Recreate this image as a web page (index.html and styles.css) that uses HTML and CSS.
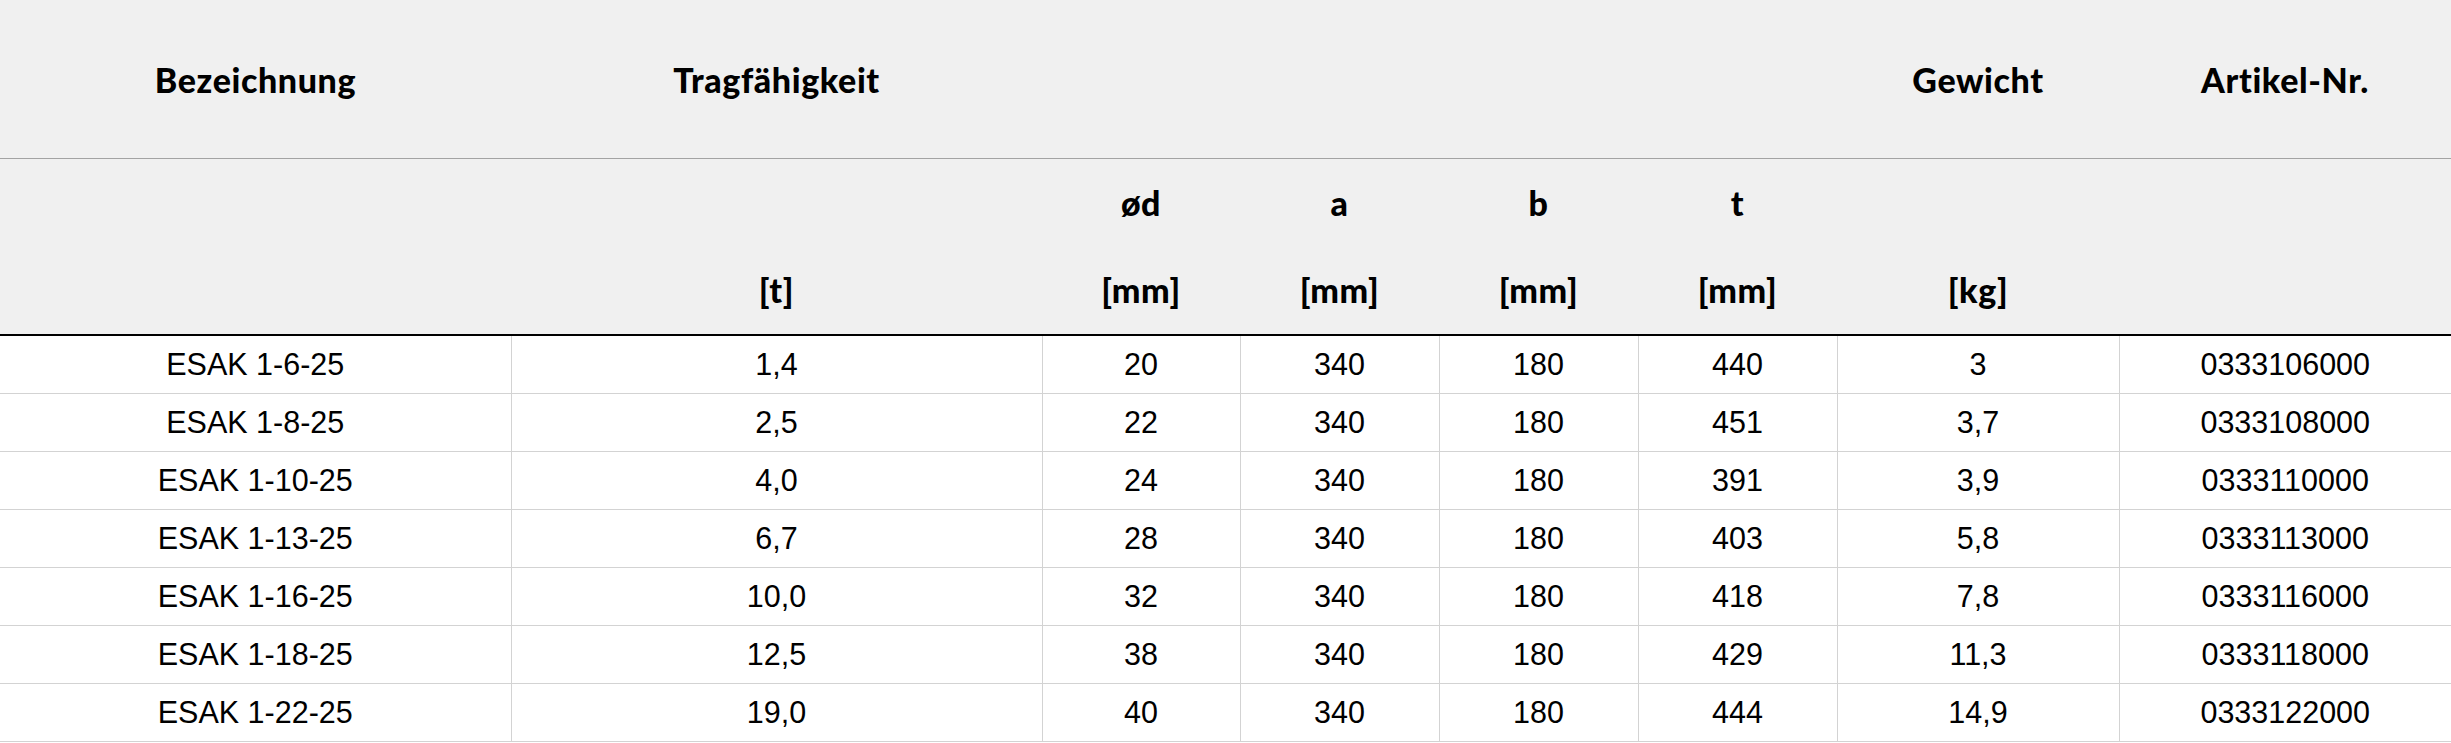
FILE: index.html
```html
<!DOCTYPE html>
<html lang="de">
<head>
<meta charset="utf-8">
<title>ESAK</title>
<link rel="stylesheet" href="styles.css">
</head>
<body>
<table class="spec">
  <colgroup>
    <col class="c-name"><col class="c-load"><col class="c-dim1"><col class="c-dim"><col class="c-dim"><col class="c-dim"><col class="c-weight"><col class="c-art">
  </colgroup>
  <thead>
    <tr class="head-main">
      <th>Bezeichnung</th>
      <th>Tragfähigkeit</th>
      <th></th>
      <th></th>
      <th></th>
      <th></th>
      <th>Gewicht</th>
      <th>Artikel-Nr.</th>
    </tr>
    <tr class="head-units">
      <th></th>
      <th><div class="line"></div><div class="line">[t]</div></th>
      <th><div class="line">ød</div><div class="line">[mm]</div></th>
      <th><div class="line">a</div><div class="line">[mm]</div></th>
      <th><div class="line">b</div><div class="line">[mm]</div></th>
      <th><div class="line">t</div><div class="line">[mm]</div></th>
      <th><div class="line"></div><div class="line">[kg]</div></th>
      <th></th>
    </tr>
  </thead>
  <tbody>
    <tr><td>ESAK 1-6-25</td><td>1,4</td><td>20</td><td>340</td><td>180</td><td>440</td><td>3</td><td>0333106000</td></tr>
    <tr><td>ESAK 1-8-25</td><td>2,5</td><td>22</td><td>340</td><td>180</td><td>451</td><td>3,7</td><td>0333108000</td></tr>
    <tr><td>ESAK 1-10-25</td><td>4,0</td><td>24</td><td>340</td><td>180</td><td>391</td><td>3,9</td><td>0333110000</td></tr>
    <tr><td>ESAK 1-13-25</td><td>6,7</td><td>28</td><td>340</td><td>180</td><td>403</td><td>5,8</td><td>0333113000</td></tr>
    <tr><td>ESAK 1-16-25</td><td>10,0</td><td>32</td><td>340</td><td>180</td><td>418</td><td>7,8</td><td>0333116000</td></tr>
    <tr><td>ESAK 1-18-25</td><td>12,5</td><td>38</td><td>340</td><td>180</td><td>429</td><td>11,3</td><td>0333118000</td></tr>
    <tr><td>ESAK 1-22-25</td><td>19,0</td><td>40</td><td>340</td><td>180</td><td>444</td><td>14,9</td><td>0333122000</td></tr>
  </tbody>
</table>
</body>
</html>
```

FILE: styles.css
```css
html, body {
  margin: 0;
  padding: 0;
  background: #ffffff;
}

.spec {
  width: 100%;
  border-collapse: collapse;
  table-layout: fixed;
}

.c-name { width: 511px; }
.c-load { width: 531px; }
.c-dim1 { width: 198px; }
.c-dim { width: 199px; }
.c-weight { width: 282px; }
.c-art { width: 332px; }

.spec th {
  background: #f0f0f0;
  font-family: Lato, "Liberation Sans", sans-serif;
  font-weight: 900;
  font-size: 34px;
  letter-spacing: 0.6px;
  color: #000;
  padding: 0;
  text-align: center;
}

.head-main th {
  height: 158px;
  border-bottom: 1px solid #a3a3a3;
  vertical-align: middle;
}

.head-units th {
  height: 175px;
  border-bottom: 2px solid #000;
  vertical-align: top;
}

.line {
  height: 87px;
  line-height: 87px;
}

.spec td {
  font-family: "Liberation Sans", Arial, sans-serif;
  font-size: 30.5px;
  color: #000;
  height: 57px;
  padding: 0;
  text-align: center;
  vertical-align: middle;
  border-bottom: 1px solid #d3d3d3;
  border-left: 1px solid #d3d3d3;
}

.spec td:first-child {
  border-left: none;
}
```
